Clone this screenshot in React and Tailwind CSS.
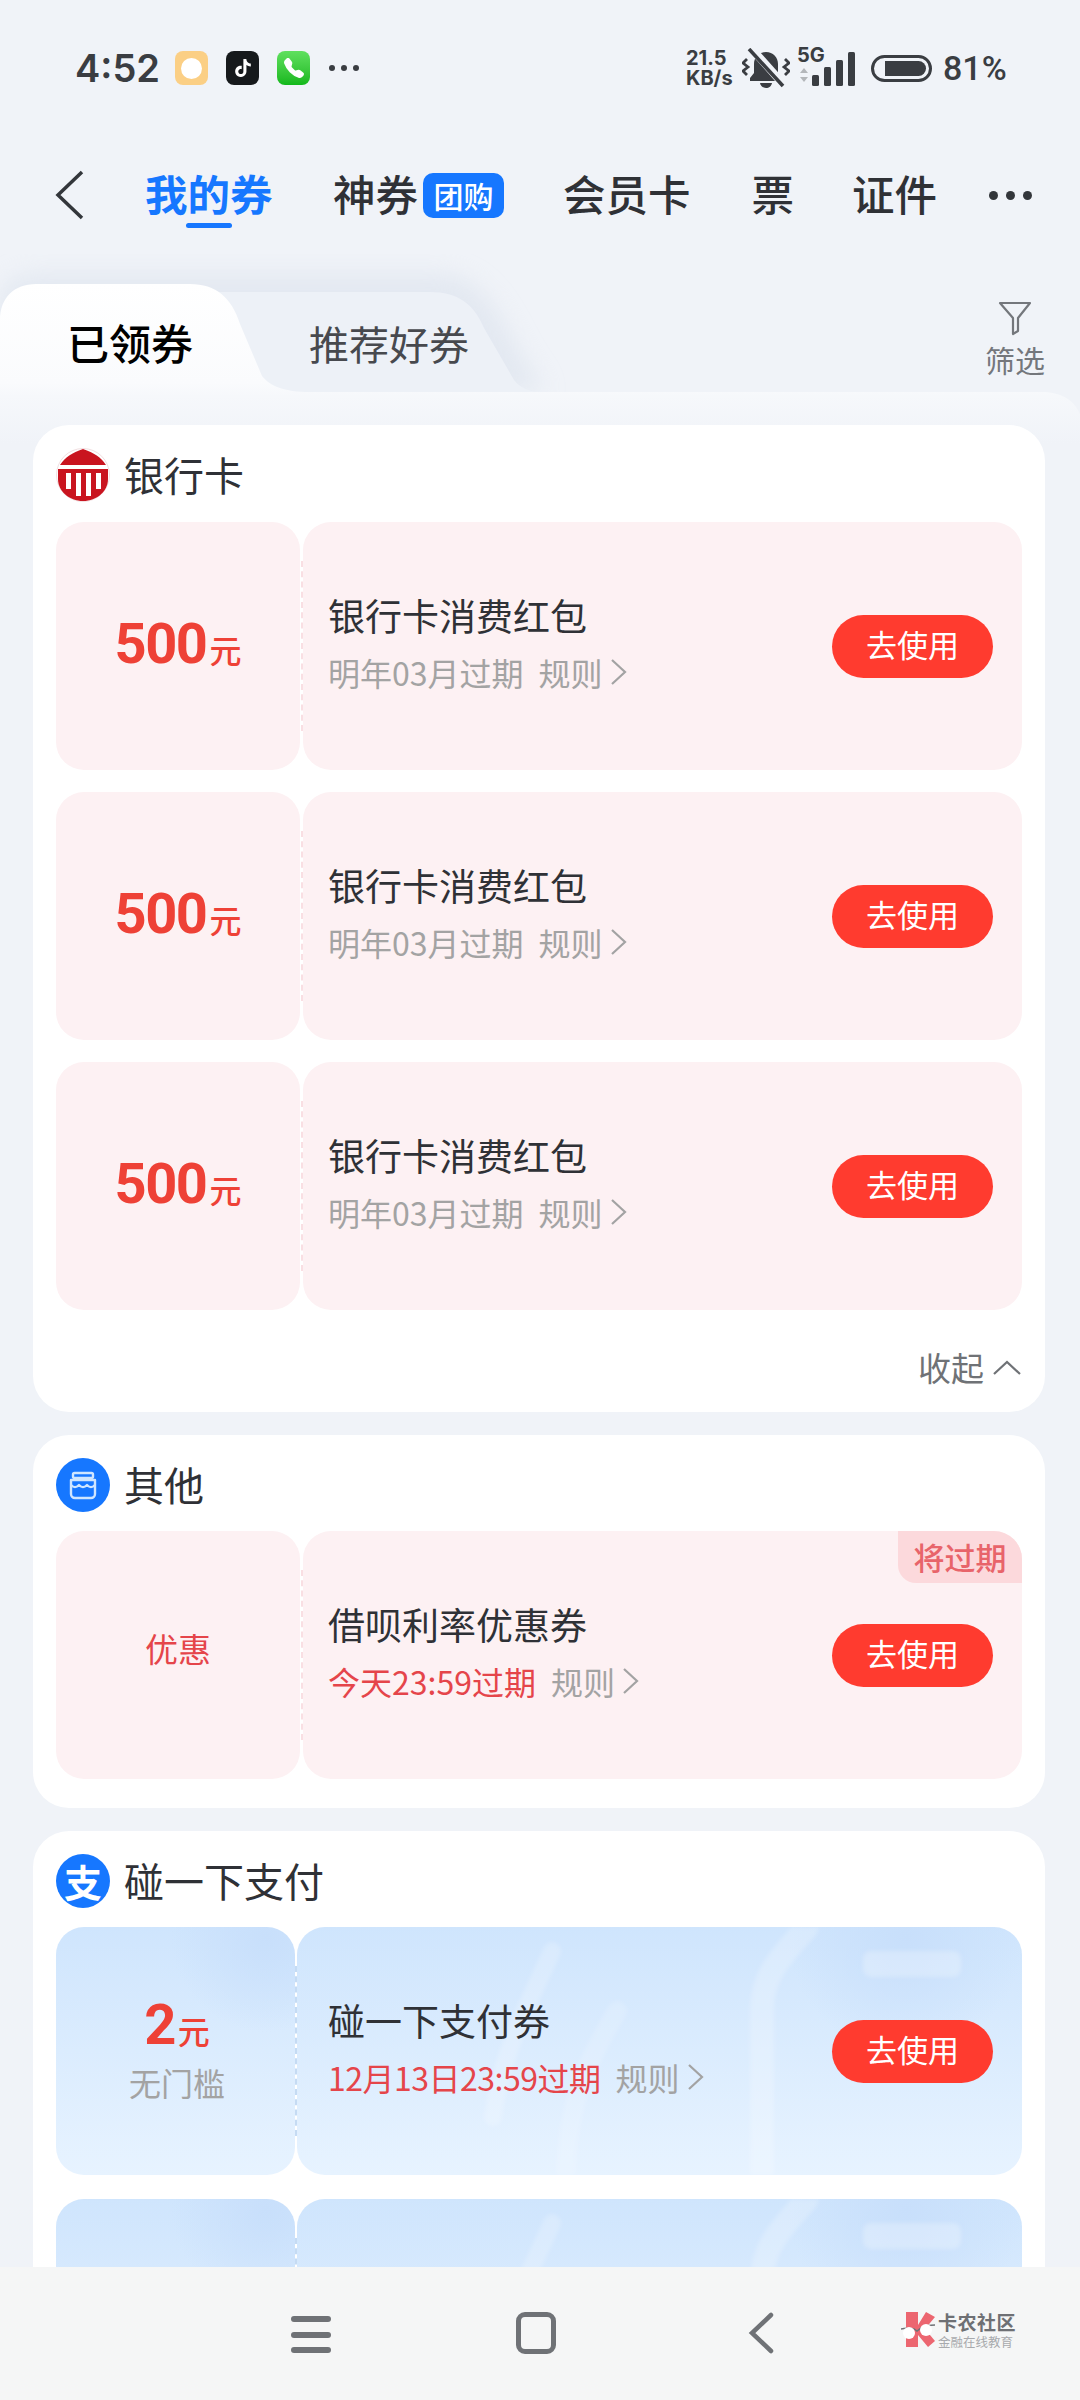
import React from "react";
import { SiTiktok } from "react-icons/si";
import { BsTelephoneFill } from "react-icons/bs";

const Chevron = ({ className = "" }) => (
  <svg viewBox="0 0 18 28" className={`w-[18px] h-[28px] ${className}`} fill="none" stroke="currentColor" strokeWidth="2.2">
    <path d="M2 2l13 12L2 26" />
  </svg>
);

const BellMuted = () => (
  <svg viewBox="0 0 48 40" className="w-[48px] h-[40px] text-[#3a3d42]">
    <path d="M24 4c-7 0-12 5-12 12v9l-4 5v3h32v-3l-4-5v-9c0-7-5-12-12-12z" fill="currentColor" />
    <path d="M18 35h12c-.5 3-3 5-6 5s-5.500-2-6-5z" fill="currentColor" />
    <path d="M9 0l33 37" stroke="#f0f3f8" strokeWidth="8" />
    <path d="M7 1l34 37" stroke="currentColor" strokeWidth="3.600" />
    <path d="M5 11L1 15l5 4-5 4 4 4M43 11l4 4-5 4 5 4-4 4" fill="none" stroke="currentColor" strokeWidth="2.800" />
  </svg>
);

const StatusBar = () => (
  <div className="h-[136px] pl-[75px] pr-[75px] flex items-center justify-between text-[#3a3d42] font-['Inter','Noto_Sans_CJK_SC',sans-serif]">
    <div className="flex items-center">
      <span className="text-[38px] font-semibold w-[100px] leading-none">4:52</span>
      <div className="w-[33px] h-[34px] rounded-[8px] bg-[#fbcf85] flex items-center justify-center">
        <div className="w-[21px] h-[21px] rounded-full bg-white" />
      </div>
      <div className="w-[33px] h-[34px] ml-[18px] rounded-[8px] bg-[#16191c] flex items-center justify-center">
        <SiTiktok className="text-white text-[18px]" />
      </div>
      <div className="w-[33px] h-[34px] ml-[18px] rounded-[8px] bg-gradient-to-b from-[#5ee05e] to-[#10b81a] flex items-center justify-center">
        <BsTelephoneFill className="text-white text-[20px]" />
      </div>
      <div className="flex gap-[6px] ml-[19px]">
        <div className="w-[6px] h-[6px] rounded-full bg-[#3a3d42]" />
        <div className="w-[6px] h-[6px] rounded-full bg-[#3a3d42]" />
        <div className="w-[6px] h-[6px] rounded-full bg-[#3a3d42]" />
      </div>
    </div>
    <div className="flex items-center">
      <div className="w-[50px] flex flex-col text-[20px] font-bold leading-[20px]">
        <span>21.5</span>
        <span>KB/s</span>
      </div>
      <div className="ml-[6px]">
        <BellMuted />
      </div>
      <div className="ml-[7px] flex items-end h-[40px] relative w-[58px]">
        <span className="absolute left-0 top-[-3px] text-[20px] font-bold leading-[20px]">5G</span>
        <svg viewBox="0 0 58 40" className="w-[58px] h-[40px]">
          <path d="M7 20l4 5H3zM7 34l4-5H3z" fill="#b3b6ba" />
          <rect x="15" y="27" width="7" height="11" rx="1.500" fill="currentColor" />
          <rect x="27" y="19" width="7" height="19" rx="1.500" fill="currentColor" />
          <rect x="39" y="12" width="7" height="26" rx="1.500" fill="currentColor" />
          <rect x="51" y="4" width="7" height="34" rx="1.500" fill="currentColor" />
        </svg>
      </div>
      <div className="ml-[16px] w-[61px] h-[27px] rounded-full border-[3px] border-[#3a3d42] flex items-center pl-[11px] pr-[3px]">
        <div className="w-[41px] h-[15px] rounded-r-full rounded-l-[3px] bg-[#3a3d42]" />
      </div>
      <span className="ml-[11px] w-[62px] text-[34px] leading-none font-medium font-['Roboto',sans-serif]">81%</span>
    </div>
  </div>
);

const NavBar = () => (
  <div className="h-[118px] relative flex items-center text-[42.500px] font-medium text-[#2f3136] font-['Noto_Sans_CJK_SC',sans-serif]">
    <svg viewBox="0 0 30 50" className="ml-[54px] w-[30px] h-[50px] text-[#33363b]" fill="none" stroke="currentColor" strokeWidth="3.500">
      <path d="M28 2L4 25l24 23" />
    </svg>
    <div className="ml-[61px] w-[127px] relative -mt-[3px] text-[#1677ff] font-bold leading-none whitespace-nowrap">
      我的券
      <div className="absolute left-[41px] top-[51px] w-[46px] h-[5px] rounded-full bg-[#1677ff]" />
    </div>
    <span className="ml-[61px] -mt-[3px] leading-none">神券</span>
    <div className="ml-[5px] w-[81px] h-[45px] rounded-[10px] bg-[#1677ff] text-white text-[30px] leading-none flex items-center justify-center">
      团购
    </div>
    <span className="ml-[59px] -mt-[3px] leading-none">会员卡</span>
    <span className="ml-[61px] -mt-[3px] leading-none">票</span>
    <span className="ml-[58px] -mt-[3px] leading-none">证件</span>
    <div className="ml-[52px] flex gap-[8px]">
      <div className="w-[9px] h-[9px] rounded-full bg-[#33363b]" />
      <div className="w-[9px] h-[9px] rounded-full bg-[#33363b]" />
      <div className="w-[9px] h-[9px] rounded-full bg-[#33363b]" />
    </div>
  </div>
);

const TabShapes = () => (
  <svg viewBox="0 0 1080 190" className="absolute left-0 top-0 w-[1080px] h-[190px]">
    <defs>
      <linearGradient id="tabFill" gradientUnits="userSpaceOnUse" x1="0" y1="30" x2="0" y2="190">
        <stop offset="0" stopColor="#ffffff" />
        <stop offset="0.62" stopColor="#fafbfd" />
        <stop offset="0.7" stopColor="#f6f8fb" />
        <stop offset="1" stopColor="#f0f3f8" />
      </linearGradient>
      <filter id="soft" x="-20%" y="-40%" width="140%" height="180%">
        <feGaussianBlur stdDeviation="12" />
      </filter>
    </defs>
    <path d="M0 138V50C0 26 20 20 40 20H440C480 20 500 60 520 100L545 138Z" fill="#d6deea" opacity="0.5" filter="url(#soft)" />
    <path d="M200 138V38H430C458 38 474 50 484 74L514 126C520 134 530 138 540 138Z" fill="#edf1f7" />
    <path d="M0 190V66C0 44 14 30 36 30H190C216 30 232 44 240 70L262 122C270 132 284 138 310 138H1040C1062 138 1074 146 1080 160V190Z" fill="url(#tabFill)" />
  </svg>
);

const Tabs = () => (
  <div className="h-[138px] relative">
    <TabShapes />
    <div className="relative h-full pl-[67px] pr-[35px] flex items-start font-['Noto_Sans_CJK_SC',sans-serif]">
      <span className="mt-[64px] text-[42px] leading-[48px] font-medium text-black">已领券</span>
      <span className="ml-[116px] mt-[65px] text-[40px] leading-[48px] text-[#47494e]">推荐好券</span>
      <div className="ml-auto mt-[46px] flex flex-col items-center text-[#74777c]">
        <svg viewBox="0 0 36 36" className="w-[36px] h-[36px]" fill="none" stroke="currentColor" strokeWidth="2.200">
          <path d="M3 3h30L21 18v13l-5 3V18z" strokeLinejoin="round" />
        </svg>
        <span className="text-[30px] leading-[36px] mt-[5px]">筛选</span>
      </div>
    </div>
  </div>
);

const BankIcon = () => (
  <svg viewBox="0 0 54 54" className="w-[54px] h-[54px]">
    <circle cx="27" cy="27" r="26.500" fill="#fff" stroke="#f1dfe1" />
    <path d="M4 17C9 9 16 5 27 1c11 4 18 8 23 16z" fill="#c9141f" />
    <path d="M2 21h50v10c0 12-11 22-25 22S2 43 2 31z" fill="#c9141f" />
    <rect x="10" y="25" width="5" height="16" fill="#fff" />
    <rect x="20" y="25" width="5" height="23" fill="#fff" />
    <rect x="30" y="25" width="5" height="23" fill="#fff" />
    <rect x="40" y="25" width="5" height="16" fill="#fff" />
  </svg>
);

const ShopIcon = () => (
  <svg viewBox="0 0 54 54" className="w-[54px] h-[54px]">
    <circle cx="27" cy="27" r="27" fill="#1677ff" />
    <g fill="none" stroke="#cfe6ff" strokeWidth="2.400" strokeLinejoin="round">
      <rect x="17" y="15" width="20" height="5" rx="1.500" />
      <path d="M15 22h24v14a4 4 0 0 1-4 4H19a4 4 0 0 1-4-4z" />
      <path d="M15 27c3 3 5 3 8 0 3 3 5 3 8 0 3 3 5 3 8 0" />
    </g>
  </svg>
);

const AlipayIcon = () => (
  <div className="w-[54px] h-[54px] rounded-full bg-[#1677ff] flex items-center justify-center text-white font-bold text-[38px] leading-none font-['Noto_Sans_CJK_SC',sans-serif]">
    支
  </div>
);

const Streaks = () => (
  <svg viewBox="0 0 725 248" preserveAspectRatio="none" className="absolute inset-0 w-full h-full blur-[2px]" fill="none" stroke="#ffffff" strokeLinecap="round">
    <path d="M255 24C240 60 205 120 196 190" strokeWidth="18" strokeOpacity="0.2" />
    <path d="M320 84C300 120 272 160 269 244" strokeWidth="20" strokeOpacity="0.15" />
    <path d="M510 0C490 24 466 44 465 80V248" strokeWidth="24" strokeOpacity="0.22" />
    <rect x="566" y="24" width="98" height="26" rx="8" fill="#ffffff" fillOpacity="0.25" stroke="none" />
  </svg>
);

const UseButton = () => (
  <div className="w-[161px] h-[63px] pb-[3px] rounded-full bg-[#ff3b2f] text-white text-[31px] flex items-center justify-center shrink-0">
    去使用
  </div>
);

const Rule = ({ children, red, tight }) => (
  <div className="mt-[16px] flex items-center text-[32px] leading-[38px] text-[#a3a3a3] whitespace-nowrap">
    <span className={`${red ? "text-[#e5454a]" : ""} ${tight ? "tracking-[-0.5px]" : ""}`}>{children}</span>
    <span className="ml-[15px]">规则</span>
    <Chevron className="ml-[7px] text-[#a3a3a3]" />
  </div>
);

const Ticket = ({ blue, stub, title, expire, red, badge }) => (
  <div className="h-[248px] flex shrink-0">
    <div
      className={`rounded-[28px] flex flex-col items-center justify-center shrink-0 ${
        blue
          ? "w-[239px] pl-[3px] bg-[radial-gradient(circle_at_88%_4%,#c8dffb_0%,transparent_30%),linear-gradient(180deg,#cfe5fd,#e7f3ff)]"
          : "w-[244px] bg-[#fdf1f3]"
      }`}
    >
      {stub}
    </div>
    <div className={`flex items-center justify-center ${blue ? "w-[2px]" : "w-[3px]"}`}>
      <div className={`h-[170px] border-l-2 border-dashed ${blue ? "border-[#c5dbf3]" : "border-[#f9dfe3]"}`} />
    </div>
    <div
      className={`flex-1 relative rounded-[28px] overflow-hidden flex items-center pr-[29px] ${
        blue
          ? "pl-[31px] bg-[radial-gradient(circle_at_84%_4%,#c8dffb_0%,transparent_18%),linear-gradient(180deg,#cfe5fd,#e7f3ff)]"
          : "pl-[25px] bg-[#fdf1f3]"
      }`}
    >
      {blue && <Streaks />}
      {badge && (
        <div className="absolute right-0 top-0 w-[124px] h-[52px] rounded-bl-[18px] bg-[#fcd9dc] text-[#e8646a] text-[31px] font-medium flex items-center justify-center">
          {badge}
        </div>
      )}
      {title && (
        <>
          <div className="relative flex-1 -mt-[9px]">
            <div className="text-[37px] leading-[44px] text-[#2f3136] whitespace-nowrap">{title}</div>
            <Rule red={red} tight={blue}>{expire}</Rule>
          </div>
          <div className="relative">
            <UseButton />
          </div>
        </>
      )}
    </div>
  </div>
);

const Amount = ({ value }) => (
  <div className="flex items-baseline text-[#ee4136] leading-none -mt-[4px]">
    <span className="text-[56px] font-bold tracking-[-1.500px] font-['Roboto',sans-serif]">{value}</span>
    <span className="ml-[3px] text-[32px] font-medium">元</span>
  </div>
);

const Section = ({ icon, title, children }) => (
  <div className="bg-white rounded-[36px] px-[23px]">
    <div className="h-[96px] flex items-center gap-[14px] pt-[3px]">
      {icon}
      <span className="text-[40px] leading-[50px] -mt-[2px] text-[#2f3136]">{title}</span>
    </div>
    {children}
  </div>
);

const bankTickets = [1, 2, 3];

const BottomBar = () => (
  <div className="absolute left-0 right-0 bottom-0 h-[133px] bg-[#f5f6f6] flex items-start pt-[45px]">
    <div className="ml-[291px] w-[40px] h-[37px] flex flex-col justify-between mt-[4px]">
      <div className="h-[6px] rounded-full bg-[#6f7276]" />
      <div className="h-[6px] rounded-full bg-[#6f7276]" />
      <div className="h-[6px] rounded-full bg-[#6f7276]" />
    </div>
    <div className="ml-[185px] w-[40px] h-[42px] rounded-[9px] border-[5px] border-[#6f7276]" />
    <svg viewBox="0 0 26 42" className="ml-[192px] w-[26px] h-[42px] text-[#6f7276]" fill="none" stroke="currentColor" strokeWidth="4.500" strokeLinecap="round">
      <path d="M23 3L4 21l19 18" />
    </svg>
    <div className="ml-[127px] flex items-center">
      <svg viewBox="0 0 36 36" className="w-[36px] h-[36px]">
        <path d="M5 0h12v13L25 0l9 5-10 12 10 12-7 6-10-12v12H5z" fill="#ec6670" />
        <path d="M0 17c4-1 8-1 13 0l3 2 4-3c4-2 9-3 14-3" fill="none" stroke="#6f7276" strokeWidth="1.500" />
        <circle cx="8" cy="21" r="6" fill="#fff" />
        <circle cx="25" cy="18" r="6" fill="#fff" />
      </svg>
      <div className="ml-[1px] flex flex-col leading-none">
        <span className="text-[19px] font-bold text-[#6e7074] tracking-[0.5px]">卡农社区</span>
        <span className="mt-[5px] text-[12.500px] text-[#a8aaad]">金融在线教育</span>
      </div>
    </div>
  </div>
);

export default function App() {
  return (
    <div className="w-[1080px] h-[2400px] relative overflow-hidden bg-[#f0f3f8] font-['Noto_Sans_CJK_SC',sans-serif]">
      <StatusBar />
      <NavBar />
      <Tabs />
      <div className="relative pl-[33px] pr-[35px] pt-[33px] flex flex-col gap-[23px]">
        <Section icon={<BankIcon />} title="银行卡">
          <div className="pt-[1px] flex flex-col gap-[22px]">
            {bankTickets.map((id) => (
              <Ticket key={id} stub={<Amount value="500" />} title="银行卡消费红包" expire="明年03月过期" />
            ))}
          </div>
          <div className="h-[102px] flex items-center justify-end pt-[14px] gap-[8px] text-[33px] text-[#6f7276]">
            <span>收起</span>
            <svg viewBox="0 0 30 16" className="w-[30px] h-[16px]" fill="none" stroke="currentColor" strokeWidth="2.200">
              <path d="M2 14L15 2l13 12" />
            </svg>
          </div>
        </Section>

        <Section icon={<ShopIcon />} title="其他">
          <div className="pb-[29px]">
            <Ticket
              stub={<span className="text-[33px] -mt-[12px] text-[#e5454a]">优惠</span>}
              title="借呗利率优惠券"
              expire="今天23:59过期"
              red
              badge="将过期"
            />
          </div>
        </Section>

        <Section icon={<AlipayIcon />} title="碰一下支付">
          <div className="flex flex-col gap-[24px]">
            <Ticket
              blue
              stub={
                <>
                  <Amount value="2" />
                  <span className="mt-[10px] text-[32px] leading-[38px] text-[#a3a3a3]">无门槛</span>
                </>
              }
              title="碰一下支付券"
              expire="12月13日23:59过期"
              red
            />
            <Ticket blue stub={null} title="" expire="" />
          </div>
        </Section>
      </div>
      <BottomBar />
    </div>
  );
}
